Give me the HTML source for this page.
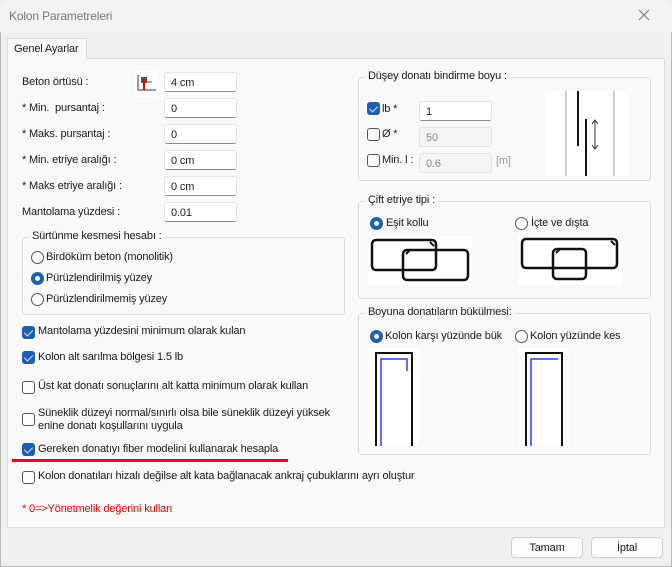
<!DOCTYPE html>
<html><head><meta charset="utf-8"><style>
*{box-sizing:border-box;margin:0;padding:0}
body{width:672px;height:567px;background:#f0f0f0;font-family:"Liberation Sans",sans-serif;font-size:11px;letter-spacing:-0.15px;color:#1a1a1a;position:relative;overflow:hidden}
.a{position:absolute;white-space:nowrap}
.win{position:absolute;left:0;top:0;width:672px;height:567px;border:1px solid #b8b8b8;border-radius:8px 8px 0 0;background:#f0f0f0}
.title{position:absolute;left:0;top:0;width:672px;height:32px;background:#f3f3f3;border-radius:8px 8px 0 0}
.panel{position:absolute;left:7px;top:58px;width:658px;height:470px;background:#f9f9f9;border:1px solid #dcdcdc}
.tab{position:absolute;left:7px;top:38px;width:80px;height:21px;background:#f9f9f9;border:1px solid #dcdcdc;border-bottom:none;padding:4px 0 0 6px;white-space:nowrap}
.in{position:absolute;width:73px;height:20px;background:#fff;border:1px solid #e3e3e3;border-bottom:1px solid #8a8a8a;border-radius:3px;padding:4px 0 0 6px}
.in.dis{background:#f5f5f5;color:#8a8a8a;border-bottom:1px solid #e3e3e3}
.grp{position:absolute;border:1px solid #dcdcdc;border-radius:3px}
.lg{position:absolute;background:#f9f9f9;padding:0 3px;top:-8px;left:6px;white-space:nowrap}
.cb{position:absolute;width:13px;height:13px;border:1px solid #555;border-radius:3px;background:#fdfdfd}
.cb.on{background:#1f5fb0;border-color:#1f5fb0}
.cb.on:after{content:"";position:absolute;left:3px;top:1px;width:4px;height:7px;border:solid #cfe0f5;border-width:0 1.5px 1.5px 0;transform:rotate(45deg)}
.rd{position:absolute;width:13px;height:13px;border:1px solid #555;border-radius:50%;background:#fdfdfd}
.rd.on{background:#fff;border:4px solid #1f5fb0}
.btn{position:absolute;width:72px;height:21px;background:#fdfdfd;border:1px solid #d0d0d0;border-radius:4px;text-align:center;padding-top:4px}
.red{color:#e00}
</style></head><body>
<div class="win"></div>
<div class="title"></div>
<div class="a" style="left:9px;top:9px;color:#777;font-size:12px">Kolon Parametreleri</div>
<svg class="a" style="left:637px;top:8px" width="14" height="14"><path d="M2 2L12 12M12 2L2 12" stroke="#777" stroke-width="1"/></svg>
<div class="panel"></div>
<div class="tab">Genel Ayarlar</div>

<div class="a" style="left:22px;top:76px">Beton örtüsü :</div>
<div class="a" style="left:22px;top:102px">* Min.&nbsp; pursantaj :</div>
<div class="a" style="left:22px;top:128px">* Maks. pursantaj :</div>
<div class="a" style="left:22px;top:154px">* Min. etriye aralığı :</div>
<div class="a" style="left:22px;top:180px">* Maks etriye aralığı :</div>
<div class="a" style="left:22px;top:206px">Mantolama yüzdesi :</div>
<svg class="a" style="left:134px;top:71px" width="24" height="26"><rect width="24" height="26" fill="#fff"/><path d="M4 4V19H22" stroke="#333" fill="none"/><rect x="7" y="6" width="6" height="6" fill="#555"/><path d="M10 8V19" stroke="#e00" stroke-width="2"/><path d="M13 11H18" stroke="#555"/></svg>
<div class="in" style="left:164px;top:72px">4 cm</div>
<div class="in" style="left:164px;top:98px">0</div>
<div class="in" style="left:164px;top:124px">0</div>
<div class="in" style="left:164px;top:150px">0 cm</div>
<div class="in" style="left:164px;top:176px">0 cm</div>
<div class="in" style="left:164px;top:202px">0.01</div>

<div class="grp" style="left:22px;top:237px;width:323px;height:78px"><div class="lg">Sürtünme kesmesi hesabı :</div></div>
<div class="rd" style="left:31px;top:251px"></div><div class="a" style="left:46px;top:251px">Birdöküm beton (monolitik)</div>
<div class="rd on" style="left:31px;top:272px"></div><div class="a" style="left:46px;top:272px">Pürüzlendirilmiş yüzey</div>
<div class="rd" style="left:31px;top:293px"></div><div class="a" style="left:46px;top:293px">Pürüzlendirilmemiş yüzey</div>

<div class="cb on" style="left:22px;top:326px"></div><div class="a" style="left:38px;top:325px">Mantolama yüzdesini minimum olarak kulan</div>
<div class="cb on" style="left:22px;top:351px"></div><div class="a" style="left:38px;top:351px">Kolon alt sarılma bölgesi 1.5 lb</div>
<div class="cb" style="left:22px;top:381px"></div><div class="a" style="left:38px;top:380px">Üst kat donatı sonuçlarını alt katta minimum olarak kullan</div>
<div class="cb" style="left:22px;top:413px"></div><div class="a" style="left:38px;top:407px;line-height:13px">Süneklik düzeyi normal/sınırlı olsa bile süneklik düzeyi yüksek<br>enine donatı koşullarını uygula</div>
<div class="cb on" style="left:22px;top:443px"></div><div class="a" style="left:38px;top:443px">Gereken donatıyı fiber modelini kullanarak hesapla</div>
<div class="a" style="left:12px;top:459px;width:276px;height:3px;background:#f00"></div>
<div class="cb" style="left:22px;top:471px"></div><div class="a" style="left:38px;top:470px">Kolon donatıları hizalı değilse alt kata bağlanacak ankraj çubuklarını ayrı oluştur</div>
<div class="a red" style="left:22px;top:503px">* 0=&gt;Yönetmelik değerini kullan</div>

<div class="grp" style="left:358px;top:77px;width:293px;height:104px"><div class="lg">Düşey donatı bindirme boyu :</div></div>
<div class="cb on" style="left:367px;top:102px"></div><div class="a" style="left:382px;top:103px">lb *</div>
<div class="in" style="left:419px;top:101px;height:20px">1</div>
<div class="cb" style="left:367px;top:128px"></div><div class="a" style="left:382px;top:128px">Ø *</div>
<div class="in dis" style="left:419px;top:127px">50</div>
<div class="cb" style="left:367px;top:154px"></div><div class="a" style="left:382px;top:154px">Min. l :</div>
<div class="in dis" style="left:419px;top:153px">0.6</div>
<div class="a" style="left:496px;top:155px;color:#999">[m]</div>
<svg class="a" style="left:545px;top:91px" width="84" height="85"><rect width="84" height="85" fill="#fff"/><path d="M21 0V85M69 0V85" stroke="#999" stroke-width="1"/><path d="M33 0V55M41 28V85" stroke="#111" stroke-width="2"/><path d="M50 30V57M47 33L50 29L53 33M47 54L50 58L53 54" stroke="#333" fill="none"/></svg>

<div class="grp" style="left:358px;top:201px;width:293px;height:98px"><div class="lg">Çift etriye tipi :</div></div>
<div class="rd on" style="left:370px;top:217px"></div><div class="a" style="left:386px;top:217px">Eşit kollu</div>
<div class="rd" style="left:515px;top:217px"></div><div class="a" style="left:531px;top:217px">İçte ve dışta</div>
<svg class="a" style="left:368px;top:236px" width="104" height="49"><rect width="104" height="49" fill="#fff"/><rect x="4" y="4" width="64" height="30" rx="4" fill="none" stroke="#111" stroke-width="2.5"/><rect x="35" y="14" width="65" height="30" rx="4" fill="none" stroke="#111" stroke-width="2.5"/><path d="M62 6L66 10M38 18L42 14" stroke="#111" stroke-width="2"/></svg>
<svg class="a" style="left:518px;top:236px" width="104" height="49"><rect width="104" height="49" fill="#fff"/><rect x="4" y="3" width="95" height="29" rx="4" fill="none" stroke="#111" stroke-width="2.5"/><rect x="35" y="13" width="33" height="30" rx="4" fill="none" stroke="#111" stroke-width="2.5"/><path d="M93 5L97 9M38 17L42 13" stroke="#111" stroke-width="2"/></svg>

<div class="grp" style="left:358px;top:313px;width:293px;height:142px"><div class="lg">Boyuna donatıların bükülmesi:</div></div>
<div class="rd on" style="left:370px;top:330px"></div><div class="a" style="left:385px;top:330px">Kolon karşı yüzünde bük</div>
<div class="rd" style="left:515px;top:330px"></div><div class="a" style="left:530px;top:330px">Kolon yüzünde kes</div>
<svg class="a" style="left:368px;top:348px" width="51" height="98"><rect width="51" height="98" fill="#fff"/><path d="M8 98V5H44V98" stroke="#111" stroke-width="2" fill="none"/><path d="M13 98V11H39V23" stroke="#2244ff" stroke-width="1.5" fill="none"/></svg>
<svg class="a" style="left:518px;top:348px" width="51" height="98"><rect width="51" height="98" fill="#fff"/><path d="M8 98V5H44V98" stroke="#111" stroke-width="2" fill="none"/><path d="M13 98V11H40" stroke="#2244ff" stroke-width="1.5" fill="none"/></svg>

<div class="btn" style="left:511px;top:537px">Tamam</div>
<div class="btn" style="left:591px;top:537px">İptal</div>
</body></html>
